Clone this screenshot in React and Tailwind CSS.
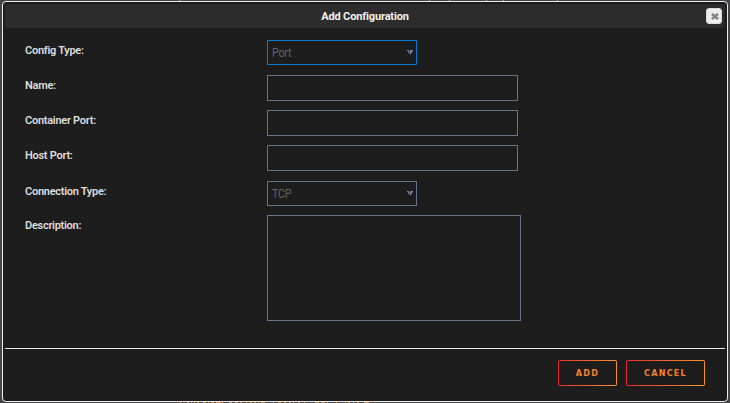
import React, { useState } from "react";

const fields = [
  { id: "configType", label: "Config Type:", type: "select", value: "Port", active: true, row: "h-[35px]" },
  { id: "name", label: "Name:", type: "text", row: "h-[35px]" },
  { id: "containerPort", label: "Container Port:", type: "text", row: "h-[35px]" },
  { id: "hostPort", label: "Host Port:", type: "text", row: "h-9" },
  { id: "connectionType", label: "Connection Type:", type: "select", value: "TCP", row: "h-[34px]" },
  { id: "description", label: "Description:", type: "textarea", row: "h-[106px]" },
];

// column lines of the page that show above the dialog
const columns = [179, 429, 449, 486, 503, 557];

// tops of the link text that shows below the dialog, [x, width]
const linkTops = [
  [180, 1], [187, 2], [191, 1], [194, 1], [197, 2], [203, 3], [208, 1], [211, 3], [216, 5], [222, 1],
  [229, 3], [235, 3], [240, 2], [246, 1], [250, 2], [254, 2], [258, 1], [261, 4], [273, 1], [278, 3],
  [284, 2], [289, 2], [293, 1], [298, 2], [304, 1], [315, 4], [321, 4], [327, 1], [336, 1], [345, 1],
  [348, 2], [353, 1], [357, 2], [364, 5],
];

const Arrow = () => (
  <svg width="6" height="6" viewBox="0 0 6 6" shapeRendering="crispEdges" fill="#7585a0">
    <path d="M0 0h2v3h-1v-2h-1zM3 0h3v1h-1v2h-1v1h-1z" />
    <path d="M2 1h1v3h-1zM5 1h1v1h-1zM3 4h1v1h-1z" opacity=".4" />
  </svg>
);

const Field = ({ field, value, onChange }) => {
  if (field.type === "select") {
    return (
      <button
        type="button"
        className={`flex h-[25px] w-[150px] items-center justify-between border pl-1 pr-[3px] text-[12px] text-[#5a656f] ${
          field.active ? "border-[#0878cf]" : "border-[#667487]"
        }`}
      >
        <span className="origin-left scale-x-90 pt-px tracking-[-0.3px]">{field.value}</span>
        <span className="pt-px">
          <Arrow />
        </span>
      </button>
    );
  }
  if (field.type === "textarea") {
    return (
      <textarea
        value={value}
        onChange={onChange}
        className="block h-[106px] w-[254px] resize-none border border-[#667487] bg-transparent p-1 text-[11px] text-gray-200 outline-none"
      />
    );
  }
  return (
    <input
      type="text"
      value={value}
      onChange={onChange}
      className="block h-[26px] w-[251px] border border-[#667487] bg-transparent px-1 text-[11px] text-gray-200 outline-none"
    />
  );
};

const ActionButton = ({ width, children }) => (
  <button
    type="button"
    className={`h-[26px] rounded-[2px] bg-linear-to-r from-[#e5242a] to-[#f7922f] p-px ${width}`}
  >
    <span className="flex h-full items-center justify-center rounded-[1px] bg-[#1d1d1d] pt-[2px] font-['DejaVu_Sans',sans-serif] text-[8px] font-bold tracking-[1.3px] text-[#f58229]">
      {children}
    </span>
  </button>
);

const App = () => {
  const [values, setValues] = useState({});

  return (
    <div className="relative h-[403px] w-[730px] overflow-hidden bg-[#454547] pl-[2px] pt-[1px] font-[Roboto,sans-serif]">
      {columns.map((x) => (
        <span key={x} className="absolute top-0 h-px w-px bg-[#a0a0a4]" style={{ left: x }} />
      ))}
      {linkTops.map(([x, w]) => (
        <span key={x} className="absolute bottom-0 h-px bg-[#d09048]" style={{ left: x, width: w }} />
      ))}

      <div className="flex h-[401px] w-[726px] flex-col rounded-[4px] border border-[#ededed] bg-[#1d1d1d] px-[2px] pt-[2px]">
        <div className="relative flex h-6 shrink-0 items-center justify-center rounded-[3px] bg-[#2c2c2c]">
          <h2 className="pt-[2px] text-[11px] font-bold tracking-[-0.15px] text-[#f2f2f2]">Add Configuration</h2>
          <button
            type="button"
            aria-label="Close"
            className="absolute right-[3px] top-1 flex size-4 items-center justify-center rounded-[3px] border border-[#dadada] bg-[#eeeeee]"
          >
            <svg width="8" height="7" viewBox="0 0 8 8" preserveAspectRatio="none" className="ml-[2px] mt-px shrink-0" fill="#858585">
              <path d="M2 0 4 1.9 6 0 8 2 6 4 8 6 6 8 4 6.1 2 8 0 6 2 4 0 2z" />
            </svg>
          </button>
        </div>

        <div className="flex-1 pl-5 pt-3">
          {fields.map((field) => (
            <div key={field.id} className={`flex items-start ${field.row}`}>
              <label className="w-[242px] shrink-0 pt-[3px] text-[11px] font-semibold leading-4 tracking-[-0.27px] text-[#dedede]">
                {field.label}
              </label>
              <Field
                field={field}
                value={values[field.id] || ""}
                onChange={(e) => setValues({ ...values, [field.id]: e.target.value })}
              />
            </div>
          ))}
        </div>

        <div className="flex h-[53px] shrink-0 items-start justify-end gap-[9px] border-t border-[#ededed] pr-5 pt-[11px]">
          <ActionButton width="w-[59px]">ADD</ActionButton>
          <ActionButton width="w-[79px]">CANCEL</ActionButton>
        </div>
      </div>
    </div>
  );
};

export default App;
